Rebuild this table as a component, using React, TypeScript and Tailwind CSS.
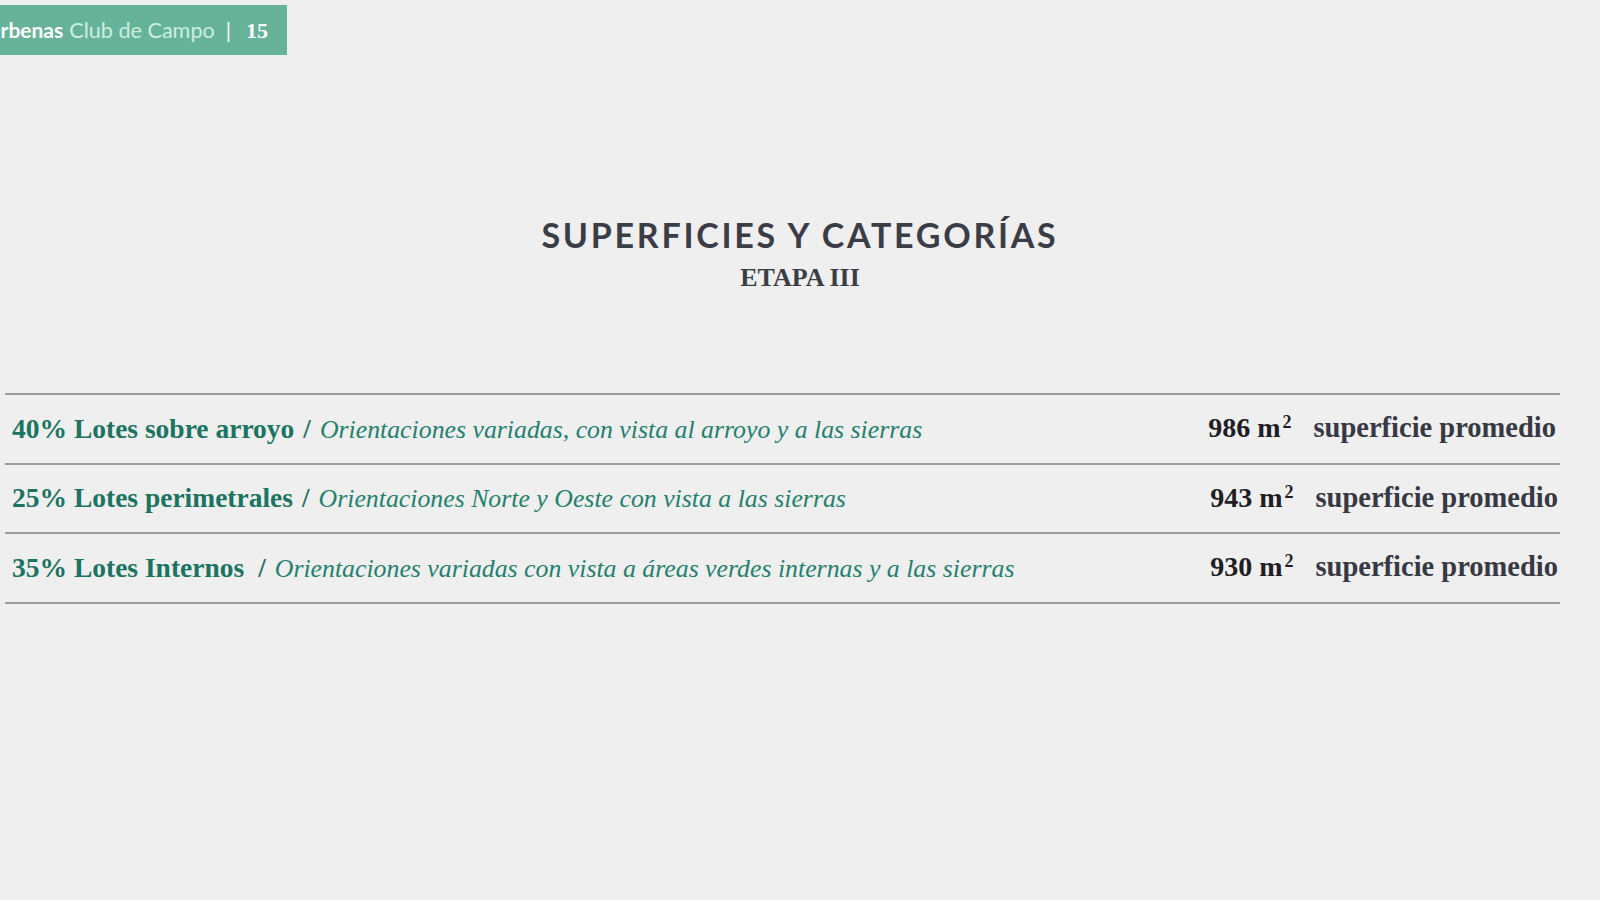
import React from 'react'

const serif = { fontFamily: '"Liberation Serif", "DejaVu Serif", serif' }
const sans = { fontFamily: 'Lato, "Liberation Sans", sans-serif' }

const rows = [
  { pct: '40% Lotes sobre arroyo', gap: '', desc: 'Orientaciones variadas, con vista al arroyo y a las sierras', area: '986', end: 'pr-[4px]' },
  { pct: '25% Lotes perimetrales', gap: '', desc: 'Orientaciones Norte y Oeste con vista a las sierras', area: '943', end: 'pr-[2px]' },
  { pct: '35% Lotes Internos', gap: 'ml-[14px]', desc: 'Orientaciones variadas con vista a áreas verdes internas y a las sierras', area: '930', end: 'pr-[2px]' },
]

function HeaderTab() {
  return (
    <div className="h-[50px] w-[287px] bg-[#66b399] overflow-hidden flex items-center justify-end pr-[19px] whitespace-nowrap">
      <span className="text-[21px] font-bold text-white" style={sans}>
        Verbenas
      </span>
      <span className="ml-[6px] text-[21.6px] text-[#cdeee2]" style={sans}>
        Club de Campo
      </span>
      <span className="ml-[11px] text-[21px] text-white" style={sans}>
        |
      </span>
      <span className="ml-[15px] text-[22px] font-bold text-white" style={serif}>
        15
      </span>
    </div>
  )
}

export default function App() {
  return (
    <div className="h-screen w-full bg-[#efefef] pt-[5px]">
      <HeaderTab />

      {/* Title */}
      <div className="mt-[163px] flex flex-col items-center text-[#3a3d46]">
        <h1 className="text-[34px] leading-none font-bold tracking-[0.08em]" style={sans}>
          SUPERFICIES Y CATEGORÍAS
        </h1>
        <div className="mt-[13px] text-[26px] leading-none font-bold" style={serif}>
          ETAPA III
        </div>
      </div>

      {/* Table */}
      <div className="mt-[102px] ml-[5px] w-[1555px] border-t-2 border-[#9c9c9c]">
        {rows.map((r) => (
          <div
            key={r.area}
            className={`h-[69.5px] border-b-2 border-[#9c9c9c] flex items-center justify-between pl-[7px] ${r.end} whitespace-nowrap`}
            style={serif}
          >
            <div className="flex items-baseline">
              <span className="text-[27.5px] font-bold text-[#1b7461]">{r.pct}</span>
              <span className={`${r.gap} ml-[9px] text-[27px] font-bold text-[#1b7461]`}>/</span>
              <span className="ml-[9px] text-[25.8px] italic text-[#24806e]">{r.desc}</span>
            </div>
            <div className="flex items-baseline">
              <span className="text-[28px] font-bold text-[#1e1e24]">
                {r.area} m<span className="relative -top-[9px] ml-[2px] text-[18px]">2</span>
              </span>
              <span className="ml-[22px] text-[28.5px] font-bold text-[#363843]">superficie promedio</span>
            </div>
          </div>
        ))}
      </div>
    </div>
  )
}
